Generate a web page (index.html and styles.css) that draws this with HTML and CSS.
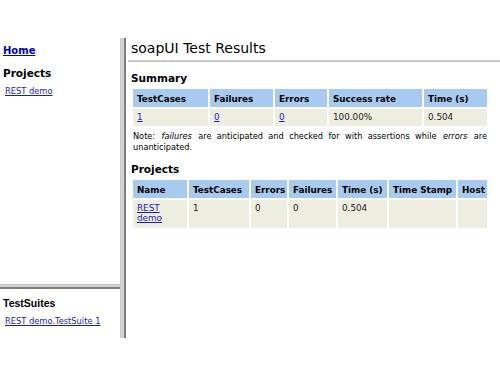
FILE: index.html
```html
<!DOCTYPE html>
<html lang="en">
<head>
    <meta charset="UTF-8">
    <title>soapUI Test Results</title>
    <link rel="stylesheet" href="styles.css">
</head>
<body>
    <div class="frames">
        <div class="side">
            <div class="side-top">
                <h3 class="home"><a href="#">Home</a></h3>
                <h3>Projects</h3>
                <a class="side-link" href="#">REST demo</a>
            </div>
            <div class="hsplit"></div>
            <div class="side-bottom">
                <h3 class="suites">TestSuites</h3>
                <a class="side-link" href="#">REST demo.TestSuite 1</a>
            </div>
        </div>
        <div class="vsplit"></div>
        <div class="main">
            <h1>soapUI Test Results</h1>

            <h2>Summary</h2>
            <table class="summary">
                <tr>
                    <th class="c1">TestCases</th>
                    <th class="c2">Failures</th>
                    <th class="c3">Errors</th>
                    <th class="c4">Success rate</th>
                    <th>Time (s)</th>
                </tr>
                <tr>
                    <td><a href="#">1</a></td>
                    <td><a href="#">0</a></td>
                    <td><a href="#">0</a></td>
                    <td>100.00%</td>
                    <td>0.504</td>
                </tr>
            </table>
            <p class="note">Note: <i>failures</i> are anticipated and checked for with assertions while <i>errors</i> are <span>unanticipated.</span></p>

            <h2>Projects</h2>
            <table class="projects">
                <tr>
                    <th class="p1">Name</th>
                    <th class="p2">TestCases</th>
                    <th class="p3">Errors</th>
                    <th class="p4">Failures</th>
                    <th class="p5">Time (s)</th>
                    <th class="p6">Time Stamp</th>
                    <th>Host</th>
                </tr>
                <tr>
                    <td><a href="#">REST demo</a></td>
                    <td>1</td>
                    <td>0</td>
                    <td>0</td>
                    <td>0.504</td>
                    <td></td>
                    <td></td>
                </tr>
            </table>
        </div>
    </div>
</body>
</html>
```

FILE: styles.css
```css
* {
    box-sizing: border-box;
}
body {
    margin: 0;
    padding-top: 38px;
    background: #fff;
    font-family: "DejaVu Sans", Verdana, sans-serif;
    color: #000;
}
.frames {
    display: flex;
    height: 300px;
}
.side {
    width: 120px;
    display: flex;
    flex-direction: column;
}
.side-top {
    flex: 1;
    padding: 7px 3px 0;
}
.side-bottom {
    height: 49px;
    padding: 8px 3px 0;
}
h3 {
    margin: 0 0 7px;
    font-size: 10.5px;
    font-weight: bold;
}
.home {
    font-size: 10px;
    margin-bottom: 11px;
}
.home a {
    color: #0000cc;
}
.suites {
    font-family: "Liberation Sans", Arial, sans-serif;
    font-size: 10.5px;
    margin-bottom: 7px;
}
.side-link {
    display: block;
    margin-left: 2px;
    font-size: 8.3px;
    color: #1a1acc;
}
.hsplit {
    height: 5px;
    background: #d4d4d4;
    border-top: 1px solid #c8c8c8;
    border-bottom: 2px solid #808080;
}
.vsplit {
    width: 6px;
    background: #d4d4d4;
    border-left: 1px solid #c8c8c8;
    border-right: 2px solid #808080;
}
.main {
    flex: 1;
    padding: 0 11px 0 5px;
}
h1 {
    margin: 2px -11px 0 -3px;
    padding: 0 0 4px 3px;
    font-size: 14px;
    font-weight: normal;
    border-bottom: 2px solid #c8c8c8;
}
h2 {
    margin: 10px 0 3px;
    font-size: 10.5px;
    font-weight: bold;
}
table {
    width: 100%;
    border-spacing: 2px;
    font-size: 8.8px;
    table-layout: fixed;
}
th {
    background: #a6caf0;
    text-align: left;
    padding: 4px 3px 3px 4px;
    height: 18px;
    white-space: nowrap;
    overflow: hidden;
}
td {
    background: #eeeee0;
    padding: 3px 4px;
    height: 17px;
    vertical-align: top;
    color: #222;
}
td a {
    color: #1a1acc;
}
.c1 { width: 75px; }
.c2 { width: 63px; }
.c3 { width: 52px; }
.c4 { width: 93px; }
.p1 { width: 54px; }
.p2 { width: 60px; }
.p3 { width: 36px; }
.p4 { width: 47px; }
.p5 { width: 49px; }
.p6 { width: 67px; }
.projects td {
    height: 28px;
}
.note {
    margin: 3px 2px 8px;
    font-size: 8.2px;
    text-align: justify;
    line-height: 11px;
}
.note i {
    padding: 0 1px;
}
```
